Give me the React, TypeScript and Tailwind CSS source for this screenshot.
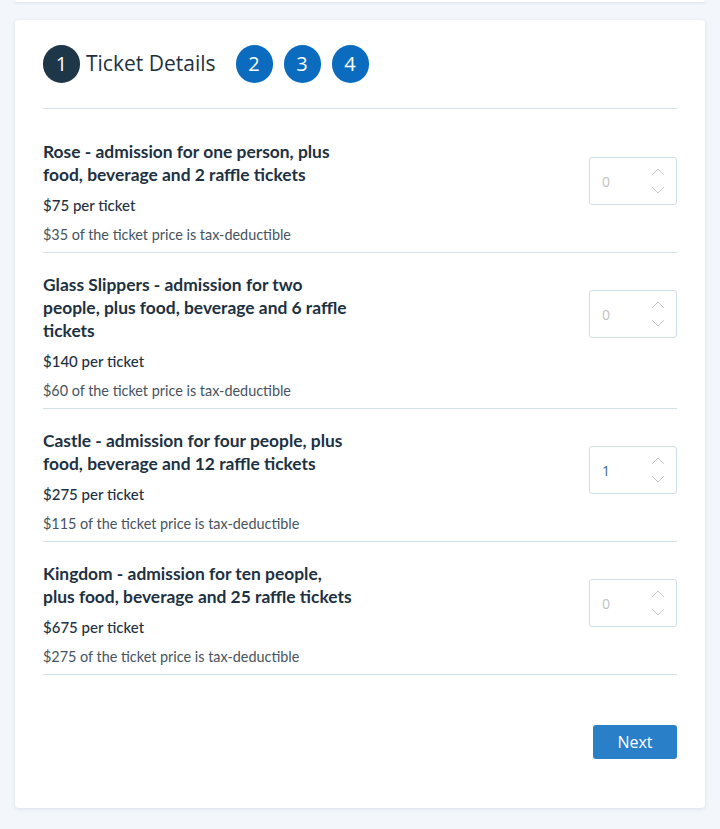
import React from "react";

type Ticket = {
  title: string;
  price: string;
  deductible: string;
  qty: number;
};

const tickets: Ticket[] = [
  {
    title: "Rose - admission for one person, plus food, beverage and 2 raffle tickets",
    price: "$75 per ticket",
    deductible: "$35 of the ticket price is tax-deductible",
    qty: 0,
  },
  {
    title: "Glass Slippers - admission for two people, plus food, beverage and 6 raffle tickets",
    price: "$140 per ticket",
    deductible: "$60 of the ticket price is tax-deductible",
    qty: 0,
  },
  {
    title: "Castle - admission for four people, plus food, beverage and 12 raffle tickets",
    price: "$275 per ticket",
    deductible: "$115 of the ticket price is tax-deductible",
    qty: 1,
  },
  {
    title: "Kingdom - admission for ten people, plus food, beverage and 25 raffle tickets",
    price: "$675 per ticket",
    deductible: "$275 of the ticket price is tax-deductible",
    qty: 0,
  },
];

function Spinner() {
  return (
    <div className="flex flex-col items-center gap-[10px]">
      <svg width="14" height="8" viewBox="0 0 14 8" fill="none">
        <path d="M1 7 L7 1 L13 7" stroke="#c6cdd2" strokeWidth="1" />
      </svg>
      <svg width="14" height="8" viewBox="0 0 14 8" fill="none">
        <path d="M1 1 L7 7 L13 1" stroke="#c6cdd2" strokeWidth="1" />
      </svg>
    </div>
  );
}

function QtyInput({ value }: { value: number }) {
  return (
    <div className="mt-[17px] flex h-[48px] w-[88px] shrink-0 items-center justify-between rounded-[3px] border border-[#cfdfe5] pl-[12px] pr-[11px]">
      <span
        className={
          value > 0
            ? "text-[14px] text-[#3a6a9a] font-['Open_Sans',sans-serif]"
            : "text-[14px] text-[#c2c2c2] font-['Open_Sans',sans-serif]"
        }
      >
        {value}
      </span>
      <Spinner />
    </div>
  );
}

function Step({ n, dark }: { n: number; dark?: boolean }) {
  return (
    <div
      className={
        dark
          ? "flex h-[38px] w-[37px] items-center justify-center rounded-full bg-[#1d3749] text-[20px] text-white"
          : "flex h-[38px] w-[37px] items-center justify-center rounded-full bg-[#0b6cbf] text-[20px] text-white"
      }
    >
      {n}
    </div>
  );
}

export default function App() {
  return (
    <div className="min-h-[829px] bg-[#f3f7fb] px-[15px] font-['Lato',sans-serif]">
      {/* bottom of previous card */}
      <div className="h-[2px] rounded-b-[4px] bg-white shadow-[0_1px_3px_rgba(60,100,140,0.18)]" />

      <div className="mt-[18px] rounded-[4px] bg-white px-[28px] pt-[25px] pb-[49px] shadow-[0_1px_4px_rgba(60,100,140,0.16)]">
        {/* steps */}
        <div className="flex items-center font-['Open_Sans',sans-serif]">
          <Step n={1} dark />
          <span className="ml-[6px] text-[21px] text-[#1d3142]">Ticket Details</span>
          <div className="ml-[20px] flex gap-[11px]">
            <Step n={2} />
            <Step n={3} />
            <Step n={4} />
          </div>
        </div>

        <div className="mt-[25px] border-t border-[#cfe1e6]" />

        <div className="pt-[11px]">
          {tickets.map((t, i) => (
            <div key={i} className="flex justify-between border-b border-[#cfe1e6] pt-[20px] pb-[7px]">
              <div className="w-[312px]">
                <h3 className="text-[17.4px] font-bold leading-[23px] text-[#1d3142]">{t.title}</h3>
                <p className="mt-[9px] text-[15px] font-medium leading-[20px] text-[#1d3142]">{t.price}</p>
                <p className="mt-[10px] text-[14.4px] font-normal leading-[20px] text-[#46545f]">{t.deductible}</p>
              </div>
              <QtyInput value={t.qty} />
            </div>
          ))}
        </div>

        <div className="mt-[50px] flex justify-end">
          <button className="h-[34px] w-[84px] rounded-[3px] bg-[#2980c8] text-[16px] text-white font-['Open_Sans',sans-serif]">
            Next
          </button>
        </div>
      </div>
    </div>
  );
}
